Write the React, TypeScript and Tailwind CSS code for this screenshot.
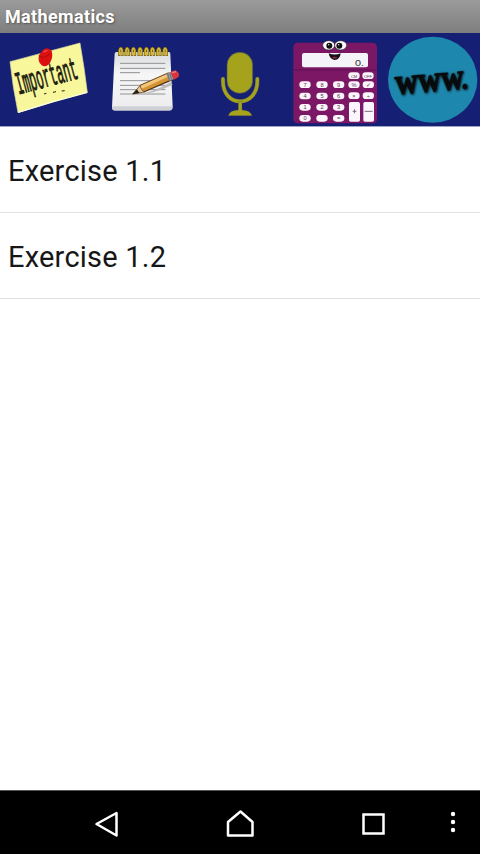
import type { ReactNode } from 'react'

interface Exercise {
  id: string
  title: string
}

const exercises: Exercise[] = [
  { id: '1.1', title: 'Exercise 1.1' },
  { id: '1.2', title: 'Exercise 1.2' }
]

function ImportantIcon() {
  return (
    <svg viewBox="0 9 288 279" className="h-[93px] w-24 overflow-visible">
      <path d="M30 95L240 39Q253 112 262 187Q160 214 54 248Q38 170 30 95Z" fill="#f8f79b" stroke="#d8dba0" strokeWidth="2" />
      <path d="M54 247Q160 213 262 187" fill="none" stroke="#fdfde0" strokeWidth="4" />
      <text
        x="0"
        y="0"
        transform="translate(56 193) rotate(-15)"
        fontFamily="'Liberation Mono', monospace"
        fontSize="96"
        textLength="188"
        lengthAdjust="spacingAndGlyphs"
        fill="#20200f"
        stroke="#20200f"
        strokeWidth="3"
      >
        Important
      </text>
      <path d="M132 192l7-2M159 187l9-2M185 183l9-1" stroke="#20200f" strokeWidth="3" />
      <path d="M128 61Q143 48 155 63Q160 80 151 97Q139 115 125 106Q112 95 117 76Z" fill="#dc1010" />
      <path d="M118 78Q130 88 150 72" fill="none" stroke="#b90808" strokeWidth="3" />
      <path d="M130 66l12-5" stroke="#f05050" strokeWidth="4" />
    </svg>
  )
}

function NotepadIcon() {
  return (
    <svg viewBox="-6 9 288 279" className="h-[93px] w-24">
      <defs>
        <linearGradient id="paper" x1="0" y1="0" x2="0" y2="1">
          <stop offset="0" stopColor="#d9dbdc" />
          <stop offset="0.4" stopColor="#f6f6f6" />
          <stop offset="1" stopColor="#ececee" />
        </linearGradient>
      </defs>
      <path d="M55 66H213Q217 66 217 71L224 230Q224 240 216 240H50Q42 240 42 231L50 71Q51 66 55 66Z" fill="url(#paper)" />
      <path d="M43 229H223V234Q222 242 214 242H51Q43 242 42 234Z" fill="#cfd0d5" />
      <path d="M66 100H202M66 115H202M66 128H126M66 152H202M66 166H202M66 179H202M66 192H202" stroke="#909195" strokeWidth="3" />
      {[68, 87, 106, 126, 145, 163, 182, 201].map((x) => (
        <g key={x}>
          <path d={`M${x - 4} 78V60q4-12 9 0V78`} fill="none" stroke="#77600c" strokeWidth="7" />
          <path d={`M${x - 3} 76V60q3-10 7 0V76`} fill="none" stroke="#d6b832" strokeWidth="5" />
        </g>
      ))}
      <path d="M112 193Q155 193 218 156L224 164Q164 194 112 193Z" fill="#bdbdbd" />
      <path d="M104 192L126 166L212 128L223 149L137 186Z" fill="#d69332" />
      <path d="M124 169L213 129L217 137L130 177Z" fill="#f1c87b" />
      <path d="M137 186L223 149" stroke="#4c341c" strokeWidth="4" />
      <path d="M126 166L212 128" stroke="#6e4a20" strokeWidth="3" />
      <path d="M104 192L126 167Q128 179 139 186Z" fill="#e8ca98" stroke="#46341f" strokeWidth="2" />
      <path d="M103 193L117 178L124 189Z" fill="#252017" />
      <path d="M204 132L218 126L228 147L213 153Z" fill="#989da0" />
      <path d="M209 130L214 151M215 127L221 149" stroke="#52575a" strokeWidth="2" />
      <path d="M217 126L231 121Q243 124 243 137Q241 143 227 149Z" fill="#d93540" />
      <path d="M222 128L234 125" stroke="#f18286" strokeWidth="4" />
    </svg>
  )
}

function MicIcon() {
  return (
    <svg viewBox="6 9 288 279" className="h-[93px] w-24">
      <rect x="111" y="67" width="77" height="123" rx="38" fill="#a5a31b" stroke="#505654" strokeWidth="2" />
      <path d="M99 147V154C99 190 121 214 150 214S202 190 202 154V147" fill="none" stroke="#505654" strokeWidth="13" strokeLinecap="round" />
      <path d="M99 147V154C99 190 121 214 150 214S202 190 202 154V147" fill="none" stroke="#a5a31b" strokeWidth="10" strokeLinecap="round" />
      <path d="M145 214H156V240Q181 241 186 257H115Q119 241 145 240Z" fill="#a5a31b" stroke="#505654" strokeWidth="1" />
    </svg>
  )
}

interface CalcKey {
  x: number
  y: number
  label: string
}

const calcKeys: CalcKey[] = [
  { x: 207, y: 137, label: 'CM' },
  { x: 249, y: 137, label: 'OFF' },
  { x: 60, y: 164, label: '7' },
  { x: 111, y: 164, label: '8' },
  { x: 161, y: 164, label: '9' },
  { x: 207, y: 164, label: '%' },
  { x: 250, y: 164, label: '✓' },
  { x: 60, y: 198, label: '4' },
  { x: 111, y: 198, label: '5' },
  { x: 161, y: 198, label: '6' },
  { x: 207, y: 197, label: '×' },
  { x: 250, y: 197, label: '÷' },
  { x: 60, y: 232, label: '1' },
  { x: 111, y: 232, label: '2' },
  { x: 161, y: 232, label: '3' },
  { x: 60, y: 265, label: '0' },
  { x: 111, y: 265, label: '' },
  { x: 161, y: 265, label: '=' }
]

function CalculatorIcon() {
  return (
    <svg viewBox="9 9 288 279" className="h-[93px] w-24" fontFamily="'Liberation Sans', sans-serif">
      <rect x="25" y="38" width="251" height="242" rx="13" fill="#7b1765" />
      <path d="M26 120H275" stroke="#5e104f" strokeWidth="3" />
      <rect x="51" y="69" width="198" height="43" rx="6" fill="#f4f3f9" />
      <text x="210" y="109" fontSize="28" textLength="27" lengthAdjust="spacingAndGlyphs" fill="#333">0.</text>
      <path d="M131 70Q149 77 167 70Q165 89 149 90Q134 88 131 70Z" fill="#17101b" />
      <path d="M141 83Q149 77 157 83Q150 88 141 83Z" fill="#8f2938" />
      {[131, 167].map((x) => (
        <g key={x}>
          <ellipse cx={x} cy="46" rx="18" ry="14" fill="#fff" stroke="#25162d" strokeWidth="2" />
          <circle cx={x === 131 ? 133 : 163} cy="47" r="9" fill="#111" />
          <circle cx={x === 131 ? 131 : 161} cy="44" r="2" fill="#fff" />
        </g>
      ))}
      {calcKeys.map((key) => (
        <g key={`${key.x}-${key.y}`}>
          <rect x={key.x - 17} y={key.y - 10} width="34" height="20" rx="10" fill="#fbf5fc" />
          <text x={key.x} y={key.y + 6} fontSize={key.label.length > 1 ? 12 : 17} textAnchor="middle" fill="#5c3457">
            {key.label}
          </text>
        </g>
      ))}
      <rect x="192" y="216" width="33" height="59" rx="5" fill="#fbf5fc" />
      <rect x="235" y="216" width="32" height="59" rx="5" fill="#fbf5fc" />
      <path d="M203 244H214M208.500 238V250M239 244H263" stroke="#80687e" strokeWidth="3" />
    </svg>
  )
}

function WebIcon() {
  return (
    <svg viewBox="12 9 288 279" className="h-[93px] w-24 overflow-visible">
      <defs>
        <filter id="wwwShadow" x="-20%" y="-20%" width="140%" height="140%">
          <feGaussianBlur stdDeviation="3" />
        </filter>
      </defs>
      <ellipse cx="158" cy="149" rx="134" ry="129" fill="#1e87ae" />
      <g fontFamily="'Liberation Serif', serif" fontWeight="700" fontSize="76" fill="#080b0d">
        <text
          transform="translate(50 196) rotate(-5)"
          textLength="217"
          lengthAdjust="spacingAndGlyphs"
          stroke="#080b0d"
          strokeWidth="5"
          filter="url(#wwwShadow)"
        >
          WWW.
        </text>
        <text
          transform="translate(48 193) rotate(-5)"
          textLength="217"
          lengthAdjust="spacingAndGlyphs"
          stroke="#080b0d"
          strokeWidth="4"
        >
          WWW.
        </text>
      </g>
    </svg>
  )
}

function ToolbarButton({ label, children }: { label: string; children: ReactNode }) {
  return (
    <button aria-label={label} className="flex h-full w-24 items-center justify-center">
      {children}
    </button>
  )
}

export default function App() {
  return (
    <div className="flex h-[854px] w-[480px] flex-col overflow-hidden bg-white font-['Roboto',sans-serif]">
      <header className="flex h-[33px] shrink-0 items-center bg-linear-to-b from-[#9b9b9b] to-[#7e7e7e] pl-[5px]">
        <h1 className="text-[18px] font-bold tracking-[0.36px] text-white [text-shadow:1px_1px_2px_#555]">Mathematics</h1>
      </header>

      <nav className="flex h-[93px] shrink-0 bg-[#151f73]">
        <ToolbarButton label="Important"><ImportantIcon /></ToolbarButton>
        <ToolbarButton label="Notes"><NotepadIcon /></ToolbarButton>
        <ToolbarButton label="Record"><MicIcon /></ToolbarButton>
        <ToolbarButton label="Calculator"><CalculatorIcon /></ToolbarButton>
        <ToolbarButton label="Web"><WebIcon /></ToolbarButton>
      </nav>

      <ul className="flex-1 border-t border-[#a0a3c5]">
        {exercises.map((exercise) => (
          <li
            key={exercise.id}
            className="flex h-[86px] items-center border-b border-[#e2e2e2] pt-[5px] pl-2 text-[29px] tracking-[0.22px] text-[#171717]"
          >
            {exercise.title}
          </li>
        ))}
      </ul>

      <footer className="h-16 shrink-0 bg-black">
        <svg viewBox="0 790 480 64" className="h-16 w-full" fill="none" stroke="#fff" strokeWidth="2.5" strokeLinejoin="round">
          <path d="M0 790.500H480" stroke="#555" strokeWidth="1" />
          <path d="M116.500 813V835.500L96.500 824Z" />
          <path d="M228 835.500V822L240.500 811.500L252.500 822V835.500Z" />
          <path d="M363.500 814.500H383.500V833.500H363.500Z" strokeLinejoin="miter" />
          <g fill="#fff" stroke="none">
            <circle cx="453" cy="814" r="2.200" />
            <circle cx="453" cy="822" r="2.200" />
            <circle cx="453" cy="830" r="2.200" />
          </g>
        </svg>
      </footer>
    </div>
  )
}
